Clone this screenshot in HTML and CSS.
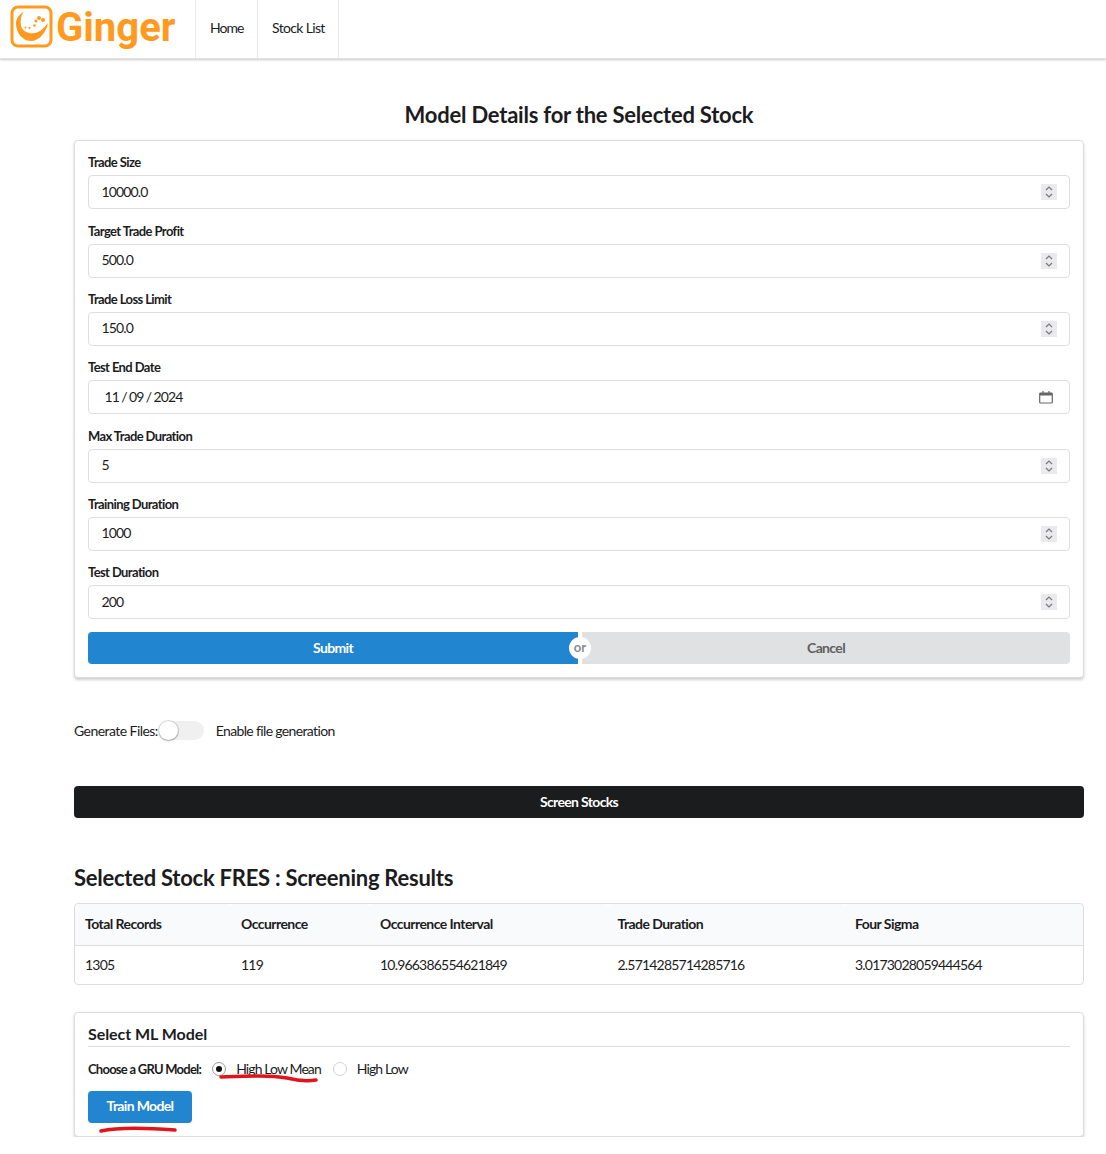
FILE: index.html
```html
<!DOCTYPE html>
<html lang="en">
<head>
    <meta charset="UTF-8">
    <title>Ginger</title>
    <link rel="stylesheet" href="styles.css">
</head>
<body>
	<div class="topbar">
		<div class="brand">
			<svg class="logo" width="44" height="44" viewBox="0 0 44 44">
				<rect x="2" y="2" width="39" height="39" rx="6" fill="none" stroke="#ff9a1f" stroke-width="3"/>
				<path d="M14 6.500C8 10 5.500 15 6 20C7 30 14 36 21 36C29 36 36 28 38 18C33 24 30 27 25 28C19 29 13 27 11 21C10 15 11 10 14 6.500Z" fill="#ff9a1f"/>
				<circle cx="33" cy="15" r="2" fill="#ff9a1f"/>
				<circle cx="29" cy="13" r="2" fill="#ff9a1f"/>
				<circle cx="26" cy="16" r="1.500" fill="#ff9a1f"/>
				<circle cx="24.500" cy="20.500" r="1.300" fill="#ff9a1f"/>
				<circle cx="19.500" cy="23" r="1.100" fill="#ff9a1f"/>
				<circle cx="15.500" cy="22.500" r="1" fill="#ff9a1f"/>
			</svg>
			<span class="brand-name">Ginger</span>
		</div>
		<a class="nav-item">Home</a>
		<a class="nav-item">Stock List</a>
	</div>

	<div class="main">
		<h2 class="page-title">Model Details for the Selected Stock</h2>
		<div class="segment form-segment">
			<div class="field">
				<label>Trade Size</label>
				<div class="input-box"><span>10000.0</span>
					<svg class="spin" width="16" height="16" viewBox="0 0 16 16"><rect width="16" height="16" fill="#e9e9ee"/><path d="M5 6l3-3 3 3M5 10l3 3 3-3" fill="none" stroke="#77777f" stroke-width="1.2"/></svg>
				</div>
			</div>
			<div class="field">
				<label>Target Trade Profit</label>
				<div class="input-box"><span>500.0</span>
					<svg class="spin" width="16" height="16" viewBox="0 0 16 16"><rect width="16" height="16" fill="#e9e9ee"/><path d="M5 6l3-3 3 3M5 10l3 3 3-3" fill="none" stroke="#77777f" stroke-width="1.2"/></svg>
				</div>
			</div>
			<div class="field">
				<label>Trade Loss Limit</label>
				<div class="input-box"><span>150.0</span>
					<svg class="spin" width="16" height="16" viewBox="0 0 16 16"><rect width="16" height="16" fill="#e9e9ee"/><path d="M5 6l3-3 3 3M5 10l3 3 3-3" fill="none" stroke="#77777f" stroke-width="1.2"/></svg>
				</div>
			</div>
			<div class="field">
				<label>Test End Date</label>
				<div class="input-box date-box"><span>11 / 09 / 2024</span>
					<svg width="14" height="14" viewBox="0 0 14 14"><path d="M1.500 3h11a.8.8 0 0 1 .8.8v8.400a.8.8 0 0 1-.8.8h-11a.8.8 0 0 1-.8-.8V3.800a.8.8 0 0 1 .8-.8z" fill="none" stroke="#666" stroke-width="1.200"/><rect x="1" y="3" width="12" height="2.500" fill="#666"/><path d="M4 1v2M10 1v2" stroke="#666" stroke-width="1.200"/></svg>
				</div>
			</div>
			<div class="field">
				<label>Max Trade Duration</label>
				<div class="input-box"><span>5</span>
					<svg class="spin" width="16" height="16" viewBox="0 0 16 16"><rect width="16" height="16" fill="#e9e9ee"/><path d="M5 6l3-3 3 3M5 10l3 3 3-3" fill="none" stroke="#77777f" stroke-width="1.2"/></svg>
				</div>
			</div>
			<div class="field">
				<label>Training Duration</label>
				<div class="input-box"><span>1000</span>
					<svg class="spin" width="16" height="16" viewBox="0 0 16 16"><rect width="16" height="16" fill="#e9e9ee"/><path d="M5 6l3-3 3 3M5 10l3 3 3-3" fill="none" stroke="#77777f" stroke-width="1.2"/></svg>
				</div>
			</div>
			<div class="field last-field">
				<label>Test Duration</label>
				<div class="input-box"><span>200</span>
					<svg class="spin" width="16" height="16" viewBox="0 0 16 16"><rect width="16" height="16" fill="#e9e9ee"/><path d="M5 6l3-3 3 3M5 10l3 3 3-3" fill="none" stroke="#77777f" stroke-width="1.2"/></svg>
				</div>
			</div>
			<div class="btn-pair">
				<div class="btn btn-blue">Submit</div>
				<div class="btn-or">or</div>
				<div class="btn btn-grey">Cancel</div>
			</div>
		</div>

		<div class="toggle-row">
			<span class="toggle-label">Generate Files:</span>
			<div class="toggle"><div class="knob"></div></div>
			<span class="toggle-text">Enable file generation</span>
		</div>

		<div class="btn btn-black">Screen Stocks</div>

		<h2 class="results-title">Selected Stock FRES : Screening Results</h2>
		<table class="results">
			<thead>
				<tr>
					<th class="c1">Total Records</th>
					<th class="c2">Occurrence</th>
					<th class="c3">Occurrence Interval</th>
					<th class="c4">Trade Duration</th>
					<th>Four Sigma</th>
				</tr>
			</thead>
			<tbody>
				<tr>
					<td>1305</td>
					<td>119</td>
					<td>10.966386554621849</td>
					<td>2.5714285714285716</td>
					<td>3.0173028059444564</td>
				</tr>
			</tbody>
		</table>

		<div class="segment ml-segment">
			<h4 class="ml-title">Select ML Model</h4>
			<div class="radio-row">
				<span class="radio-label">Choose a GRU Model:</span>
				<span class="radio on"></span>
				<span class="radio-text">High Low Mean</span>
				<span class="radio"></span>
				<span class="radio-text">High Low</span>
				<svg class="scribble scribble-a" width="102" height="10" viewBox="0 0 102 10"><path d="M2 3C30 2 50 1 68 4C80 7 90 7 97 6" fill="none" stroke="#e0141c" stroke-width="3.500" stroke-linecap="round"/></svg>
			</div>
			<div class="btn btn-blue btn-train">Train Model</div>
			<svg class="scribble scribble-b" width="80" height="10" viewBox="0 0 80 10"><path d="M2 7C20 3 50 4 76 6" fill="none" stroke="#e0141c" stroke-width="3.500" stroke-linecap="round"/></svg>
		</div>
	</div>
</body>
</html>
```

FILE: styles.css
```css
*{
	box-sizing: border-box;
}
body{
	margin: 0;
	background: #fff;
	color: #1c1c1e;
	font-family: Lato, "Liberation Sans", sans-serif;
	font-size: 14px;
	letter-spacing: -0.65px;
}
.topbar{
	display: flex;
	height: 59px;
	border-bottom: 1px solid #e2e2e3;
	box-shadow: 0 1px 2px rgba(34,36,38,0.25);
}
.brand{
	display: flex;
	align-items: center;
	width: 196px;
	padding: 0 0 4px 10px;
	border-right: 1px solid #e8e8e9;
}
.logo{
	flex: none;
}
.brand-name{
	margin-left: 2px;
	color: #ff9a1f;
	font-family: Roboto, sans-serif;
	font-size: 40px;
	font-weight: 700;
	letter-spacing: 0;
}
.nav-item{
	display: flex;
	align-items: center;
	padding: 0 13px 4px 14px;
	border-right: 1px solid #e8e8e9;
	color: #1c1c1e;
}
.nav-item:first-of-type{
	width: 62px;
	letter-spacing: -0.95px;
}
.main{
	width: 1010px;
	margin-left: 74px;
}
.page-title{
	margin: 42px 0 11px;
	text-align: center;
	font-size: 22px;
	line-height: 28px;
	font-weight: 700;
	letter-spacing: -0.22px;
}
.segment{
	position: relative;
	border: 1px solid #dcdcdd;
	border-radius: 4px;
	box-shadow: 0 2px 3px rgba(34,36,38,0.22);
	background: #fff;
}
.form-segment{
	padding: 13.4px 13px 13px;
	height: 538px;
}
.field{
	margin-bottom: 13.3px;
}
.last-field{
	margin-bottom: 13px;
}
.field label{
	display: block;
	margin-bottom: 5px;
	font-size: 13px;
	line-height: 16px;
	font-weight: 700;
	letter-spacing: -0.6px;
}
.input-box{
	display: flex;
	align-items: center;
	justify-content: space-between;
	height: 34px;
	padding: 0 12px 0 12.5px;
	border: 1px solid #dedee0;
	border-radius: 4px;
}
.input-box span{
	padding-bottom: 2px;
	letter-spacing: -0.85px;
}
.date-box{
	padding: 0 16px 0 15.5px;
	word-spacing: -0.5px;
}
.btn{
	display: flex;
	align-items: center;
	justify-content: center;
	height: 32px;
	padding-bottom: 2px;
	border-radius: 4px;
	font-weight: 700;
}
.btn-blue{
	background: #2185d0;
	color: #fff;
}
.btn-grey{
	background: #e0e1e2;
	color: #5f5f60;
}
.btn-black{
	margin-top: 46px;
	background: #1b1c1d;
	color: #fff;
}
.btn-pair{
	position: relative;
	display: flex;
	gap: 4px;
}
.btn-pair .btn-blue{
	width: 490px;
	border-radius: 4px 0 0 4px;
}
.btn-pair .btn-grey{
	flex: 1;
	border-radius: 0 4px 4px 0;
}
.btn-or{
	position: absolute;
	left: 481px;
	top: 5px;
	width: 22px;
	height: 22px;
	border-radius: 50%;
	background: #fff;
	color: #8a8a8c;
	text-align: center;
	line-height: 21px;
	font-weight: 700;
	font-size: 13px;
	letter-spacing: 0;
}
.toggle-row{
	display: flex;
	align-items: center;
	margin-top: 42px;
	height: 20px;
}
.toggle-label{
	letter-spacing: -0.55px;
}
.toggle{
	position: relative;
	width: 45px;
	height: 19px;
	margin-left: 1px;
	border-radius: 10px;
	background: #f0f0f0;
}
.knob{
	position: absolute;
	left: 0;
	top: 0;
	width: 19px;
	height: 19px;
	border-radius: 50%;
	background: #fff;
	box-shadow: 0 1px 2px rgba(34,36,38,0.3), 0 0 0 1px rgba(34,36,38,0.15);
}
.toggle-text{
	margin-left: 12px;
}
.results-title{
	margin: 46px 0 11px;
	font-size: 22px;
	line-height: 28px;
	font-weight: 700;
	letter-spacing: -0.25px;
}
.results{
	width: 100%;
	border: 1px solid #dcdcdd;
	border-radius: 4px;
	border-collapse: separate;
	border-spacing: 0;
	table-layout: fixed;
}
.results th{
	height: 42px;
	padding: 0 10px 2px;
	background: #f9fafb;
	border-bottom: 1px solid #dcdcdd;
	text-align: left;
	font-weight: 700;
	letter-spacing: -0.55px;
	border-radius: 4px 4px 0 0;
}
.results td{
	height: 38px;
	padding: 0 10px 1px;
	letter-spacing: -0.8px;
}
.c1{
	width: 156px;
}
.c2{
	width: 139px;
}
.c3, .c4{
	width: 237.500px;
}
.ml-segment{
	margin-top: 27px;
	height: 125px;
	padding: 12px 13px 0;
}
.ml-title{
	margin: 0;
	padding-bottom: 4px;
	border-bottom: 1px solid #dedee0;
	font-size: 16px;
	line-height: 17px;
	font-weight: 700;
	letter-spacing: -0.05px;
}
.radio-row{
	position: relative;
	display: flex;
	align-items: center;
	height: 20px;
	margin-top: 12px;
}
.radio-label{
	margin-right: 11px;
	font-size: 13px;
	font-weight: 700;
	letter-spacing: -0.75px;
}
.radio{
	position: relative;
	width: 14px;
	height: 14px;
	border: 1px solid #d4d4d5;
	border-radius: 50%;
}
.radio.on{
	border-color: #9a9a9c;
}
.radio.on::after{
	content: "";
	position: absolute;
	left: 3px;
	top: 3px;
	width: 6px;
	height: 6px;
	border-radius: 50%;
	background: #111;
}
.radio-text{
	margin: 0 12px 0 10px;
	padding-bottom: 2px;
	letter-spacing: -0.9px;
}
.btn-train{
	width: 104px;
	margin-top: 12px;
	padding-bottom: 3px;
}
.scribble{
	position: absolute;
}
.scribble-a{
	left: 131px;
	top: 15px;
}
.scribble-b{
	left: 24px;
	top: 111px;
}
```
